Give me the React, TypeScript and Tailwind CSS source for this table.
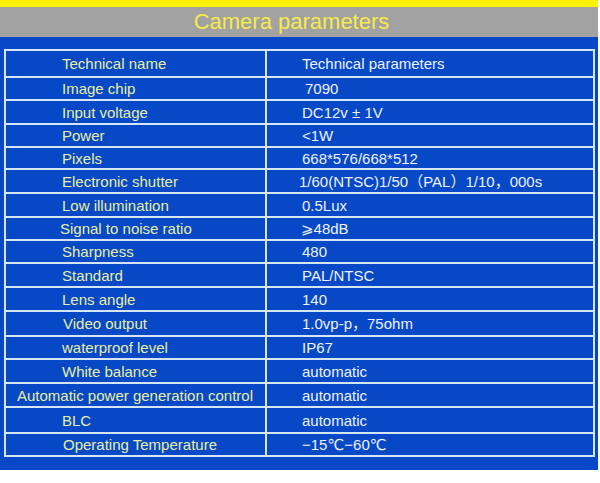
import React from "react";

type Row = { name: string; value: string; h: string; nl: string; vl: string };

const rows: Row[] = [
  { name: "Technical name", value: "Technical parameters", h: "h-[25px]", nl: "pl-[56px]", vl: "pl-[35px]" },
  { name: "Image chip", value: "7090", h: "h-[23px]", nl: "pl-[56px]", vl: "pl-[38px]" },
  { name: "Input voltage", value: "DC12v ± 1V", h: "h-[24px]", nl: "pl-[56px]", vl: "pl-[35px]" },
  { name: "Power", value: "<1W", h: "h-[23px]", nl: "pl-[56px]", vl: "pl-[35px]" },
  { name: "Pixels", value: "668*576/668*512", h: "h-[22px]", nl: "pl-[56px]", vl: "pl-[35px]" },
  { name: "Electronic shutter", value: "1/60(NTSC)1/50（PAL）1/10，000s", h: "h-[24px]", nl: "pl-[56px]", vl: "pl-[32px]" },
  { name: "Low illumination", value: "0.5Lux", h: "h-[24px]", nl: "pl-[56px]", vl: "pl-[35px]" },
  { name: "Signal to noise ratio", value: "⩾48dB", h: "h-[23px]", nl: "pl-[54px]", vl: "pl-[34px]" },
  { name: "Sharpness", value: "480", h: "h-[23px]", nl: "pl-[56px]", vl: "pl-[35px]" },
  { name: "Standard", value: "PAL/NTSC", h: "h-[24px]", nl: "pl-[56px]", vl: "pl-[35px]" },
  { name: "Lens angle", value: "140", h: "h-[24px]", nl: "pl-[56px]", vl: "pl-[35px]" },
  { name: "Video output", value: "1.0vp-p，75ohm", h: "h-[25px]", nl: "pl-[57px]", vl: "pl-[35px]" },
  { name: "waterproof level", value: "IP67", h: "h-[23px]", nl: "pl-[56px]", vl: "pl-[35px]" },
  { name: "White balance", value: "automatic", h: "h-[24px]", nl: "pl-[56px]", vl: "pl-[35px]" },
  { name: "Automatic power generation control", value: "automatic", h: "h-[24px]", nl: "pl-[11px]", vl: "pl-[35px]" },
  { name: "BLC", value: "automatic", h: "h-[26px]", nl: "pl-[56px]", vl: "pl-[35px]" },
  { name: "Operating Temperature", value: "−15℃−60℃", h: "h-[23px]", nl: "pl-[57px]", vl: "pl-[35px]" },
];

export default function App() {
  return (
    <div
      className="w-[600px] h-[483px] bg-white overflow-hidden"
      style={{ fontFamily: '"Liberation Sans", Arial, "DejaVu Sans", "Noto Sans CJK SC", sans-serif' }}
    >
      <div className="w-[598px]">
        <div className="h-[7px] bg-[#fff200]" />
        <div className="h-[30px] bg-[#a2a2a2] flex items-center justify-center pr-[15px]">
          <span className="text-[22px] leading-none text-[#f6ea4c]">Camera parameters</span>
        </div>
        <div className="h-[433px] bg-[#0648c6] pt-[12px] pl-[4px] pr-[3px]">
          <div className="border-2 border-[#d4e6f4] flex flex-col">
            {rows.map((r, i) => (
              <div
                key={i}
                className={`${r.h} flex ${i > 0 ? "border-t-2 border-[#d4e6f4]" : ""}`}
              >
                <div
                  className={`w-[261px] shrink-0 border-r-2 border-[#d4e6f4] flex items-center ${r.nl} text-[15px] leading-none text-[#e8efa4] whitespace-nowrap`}
                >
                  {r.name}
                </div>
                <div
                  className={`flex-1 flex items-center ${r.vl} text-[15px] leading-none text-[#eef3ff] whitespace-nowrap`}
                >
                  {r.value}
                </div>
              </div>
            ))}
          </div>
        </div>
      </div>
    </div>
  );
}
